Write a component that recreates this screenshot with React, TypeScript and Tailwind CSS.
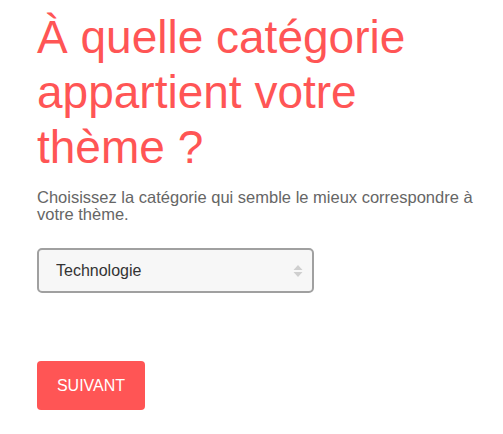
const App = () => {
  return (
    <div className="min-h-screen w-full bg-white font-['Liberation_Sans',Arial,sans-serif]">
      <div className="pl-[37px] pr-[20px] pt-[10px]">
        <h1 className="text-[46px] leading-[55px] font-normal text-[#ff5555] max-w-[440px]">
          À quelle catégorie appartient votre thème ?
        </h1>

        <p className="mt-[14px] text-[16.5px] leading-[17px] text-[#666666]">
          Choisissez la catégorie qui semble le mieux correspondre à votre thème.
        </p>

        <div className="relative mt-[25px] w-[277px]">
          <select
            defaultValue="tech"
            className="h-[45px] w-full appearance-none rounded-[5px] border-2 border-[#a0a0a0] bg-[#f7f7f7] pl-[17px] pr-8 text-[16px] text-[#333333] outline-none"
          >
            <option value="tech">Technologie</option>
            <option value="science">Science</option>
            <option value="art">Art</option>
          </select>
          <svg
            className="pointer-events-none absolute right-[11px] top-1/2 -translate-y-1/2"
            width="10"
            height="14"
            viewBox="0 0 10 14"
          >
            <path d="M5 1 L9.5 6 H0.5 Z" fill="#cfcfcf" />
            <path d="M5 13 L9.5 8 H0.5 Z" fill="#cfcfcf" />
          </svg>
        </div>

        <button className="mt-[68px] h-[49px] w-[108px] rounded-[4px] bg-[#ff5555] text-[16px] text-white">
          SUIVANT
        </button>
      </div>
    </div>
  );
};

export default App;
